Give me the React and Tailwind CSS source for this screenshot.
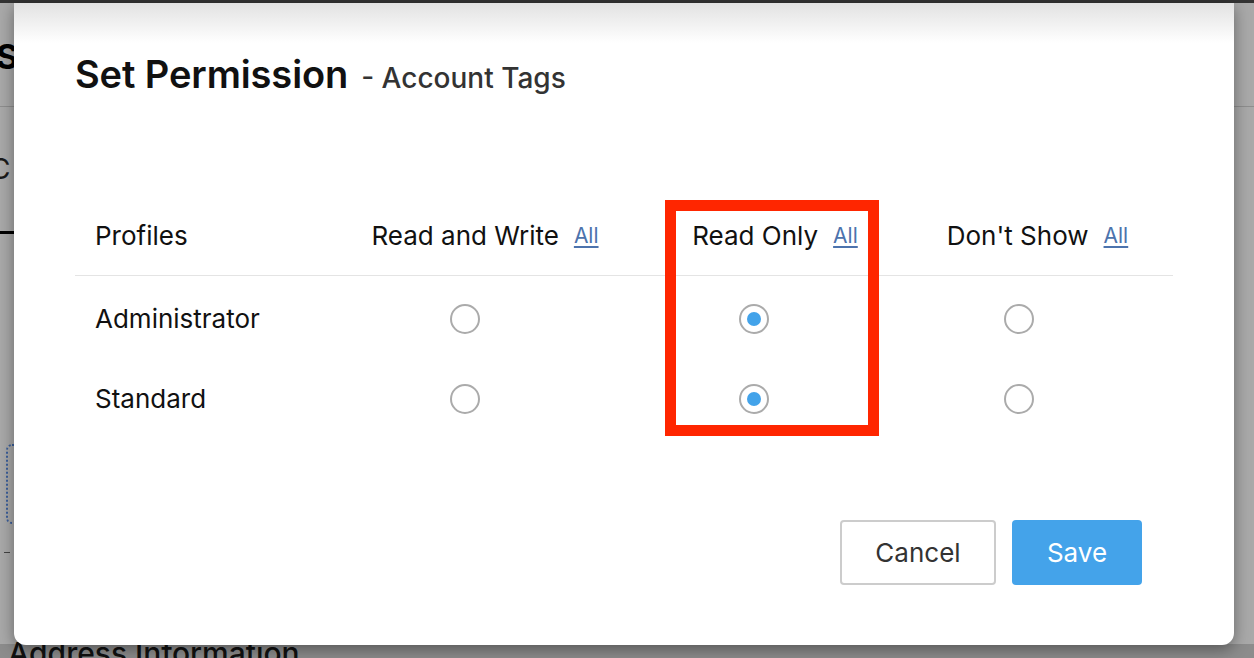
import React from "react";

function Radio({ checked }) {
  return (
    <span className="flex h-[30px] w-[30px] items-center justify-center rounded-full border-2 border-[#ababab] bg-white">
      {checked && <span className="h-[14px] w-[14px] rounded-full bg-[#43a3ea]" />}
    </span>
  );
}

function Head({ label, shift = "" }) {
  return (
    <div className={`flex items-center justify-center gap-[15px] ${shift}`}>
      <span>{label}</span>
      <a className="text-[21px] text-[#4c73ad] underline underline-offset-[3px] decoration-[1.5px]">All</a>
    </div>
  );
}

const rows = ["Administrator", "Standard"];

export default function App() {
  return (
    <div
      className="relative h-[658px] w-[1254px] overflow-hidden bg-[#a9a9a9] leading-none"
      style={{ fontFamily: "Inter, 'Liberation Sans', sans-serif" }}
    >
      {/* background page, dimmed */}
      <div className="flex h-full flex-col">
        <div className="h-[3px] bg-[#333333]" />
        <div className="flex h-[104px] items-start border-b border-[#8e8e8e] pt-[37px]">
          <span className="-ml-[4px] text-[34px] font-bold text-black">St</span>
        </div>
        <div className="flex h-[124px] items-center">
          <span className="-ml-[10px] text-[28px] text-[#1a1a1a]">C</span>
        </div>
        <div className="h-[3px] w-[16px] bg-black" />
        <div className="ml-[6px] mt-[210px] h-[80px] w-[20px] rounded-l-md border-2 border-dotted border-[#3b5f9c]" />
        <div className="ml-[4px] mt-[28px] h-[1px] w-[6px] bg-[#444]" />
        <div className="flex-1" />
        <div className="flex h-[14px] items-start bg-[#8c8c8c] pl-[8px]">
          <span className="-mt-[6px] text-[30px] font-medium text-[#111]">Address Information</span>
        </div>
      </div>

      {/* modal */}
      <div className="absolute left-[14px] top-[3px] z-20 h-[642px] w-[1220px] rounded-b-[12px] bg-white shadow-[0_4px_16px_rgba(0,0,0,0.4)]">
        <div className="absolute inset-x-0 top-0 h-[40px] bg-linear-to-b from-[#e2e2e2] to-white" />
        <div className="relative flex h-full flex-col pl-[61px] pr-[61px] text-[#111]">
          <div className="mt-[52px] flex items-baseline">
            <span className="text-[38px] font-semibold tracking-[-0.1px]">Set Permission</span>
            <span className="ml-[13px] text-[28px] font-medium text-[#333]">- Account Tags</span>
          </div>

          <div className="mt-[103px] text-[26px]">
            <div className="grid h-[80px] grid-cols-[265px_290px_290px_1fr] items-center border-b border-[#e4e4e4]">
              <div className="pl-[20px]">Profiles</div>
              <Head label="Read and Write" />
              <Head label="Read Only" />
              <Head label="Don't Show" shift="pr-[18px]" />
            </div>
            <div className="pt-[3px]">
              {rows.map((name) => (
                <div key={name} className="grid h-[80px] grid-cols-[265px_290px_290px_1fr] items-center">
                  <div className="pl-[20px]">{name}</div>
                  <div className="flex justify-center pr-[40px]"><Radio /></div>
                  <div className="flex justify-center pr-[42px]"><Radio checked /></div>
                  <div className="flex justify-center pr-[56px]"><Radio /></div>
                </div>
              ))}
            </div>
          </div>

          <div className="mt-[81px] flex justify-end gap-[16px] pr-[31px]">
            <button className="h-[65px] w-[156px] rounded-[4px] border-2 border-[#cccccc] bg-white text-[26px] text-[#333]">
              Cancel
            </button>
            <button className="h-[65px] w-[130px] rounded-[4px] bg-[#44a3ea] text-[26px] text-white">
              Save
            </button>
          </div>
        </div>

        {/* highlight box */}
        <div className="absolute left-[651px] top-[197px] h-[236px] w-[214px] border-[11px] border-[#ff2600]" />
      </div>
    </div>
  );
}
